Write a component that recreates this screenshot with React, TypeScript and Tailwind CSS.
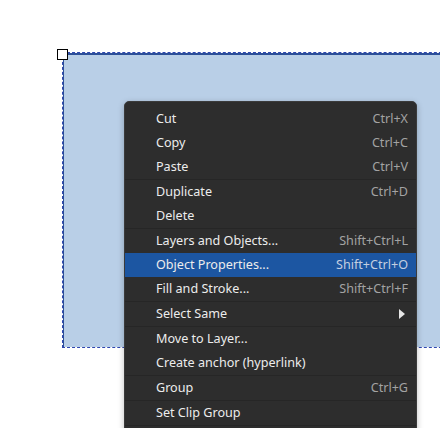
type Item = { label: string; shortcut?: string; sub?: boolean; active?: boolean; sep?: boolean }

const items: Item[] = [
  { label: 'Cut', shortcut: 'Ctrl+X' },
  { label: 'Copy', shortcut: 'Ctrl+C' },
  { label: 'Paste', shortcut: 'Ctrl+V', sep: true },
  { label: 'Duplicate', shortcut: 'Ctrl+D' },
  { label: 'Delete', sep: true },
  { label: 'Layers and Objects...', shortcut: 'Shift+Ctrl+L' },
  { label: 'Object Properties...', shortcut: 'Shift+Ctrl+O', active: true },
  { label: 'Fill and Stroke...', shortcut: 'Shift+Ctrl+F', sep: true },
  { label: 'Select Same', sub: true, sep: true },
  { label: 'Move to Layer...' },
  { label: 'Create anchor (hyperlink)', sep: true },
  { label: 'Group', shortcut: 'Ctrl+G', sep: true },
  { label: 'Set Clip Group', sep: true },
]

export default function App() {
  return (
    <div
      className="relative w-[440px] h-[428px] overflow-hidden bg-white"
      style={{ fontFamily: '"Noto Sans", sans-serif' }}
    >
      {/* selected rectangle on canvas */}
      <div className="absolute left-[62px] top-[52px] w-[400px] h-[296px] bg-white border border-dashed border-[#2e47b0]">
        <div className="w-full h-full bg-[#b9cfe7] border-t-2 border-l border-[#2c4f98]" />
      </div>
      <div className="absolute left-[57px] top-[49px] w-[11px] h-[11px] bg-white border border-black" />

      {/* context menu */}
      <div className="absolute left-[124px] top-[101px] w-[293px] h-[340px] bg-[#2d2d2d] border border-[#3b3b3b] rounded-[5px] pt-[5px] shadow-[0_2px_6px_rgba(0,0,0,0.25)]">
        {items.map(it => (
          <div key={it.label}>
            <div
              className={`h-6 flex items-center justify-between pl-[31px] pr-2 text-[12.6px] ${
                it.active ? 'bg-[#1c56a2]' : ''
              }`}
            >
              <span className="text-[#ececec]">{it.label}</span>
              {it.shortcut && (
                <span className={it.active ? 'text-[#c4cfe0]' : 'text-[#a3a3a3]'}>{it.shortcut}</span>
              )}
              {it.sub && (
                <svg width="6" height="10" viewBox="0 0 6 10" className="mr-[3px]">
                  <path d="M0 0 L6 5 L0 10 Z" fill="#e6e6e6" />
                </svg>
              )}
            </div>
            {it.sep && <div className="h-px bg-[#262626]" />}
          </div>
        ))}
      </div>
    </div>
  )
}
